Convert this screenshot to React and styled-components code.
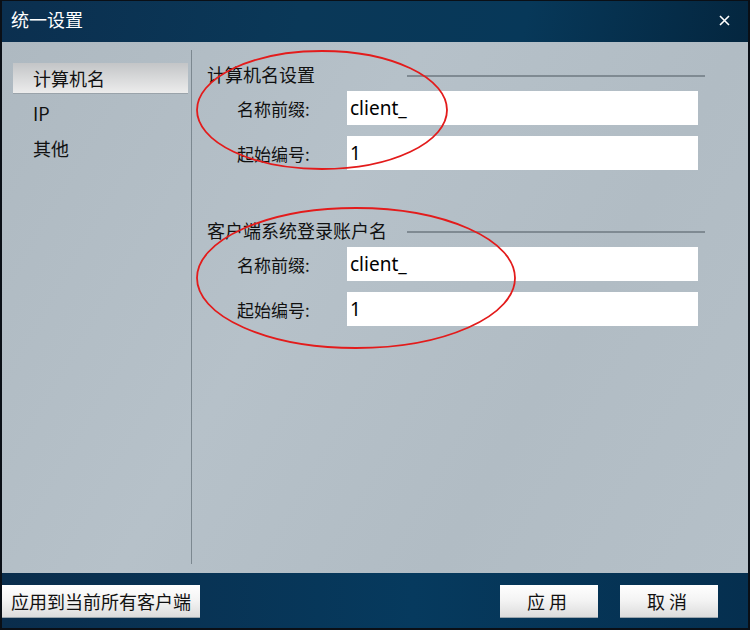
import React from 'react';
import styled, { createGlobalStyle } from 'styled-components';

const GlobalStyle = createGlobalStyle`
  html, body {
    margin: 0;
    padding: 0;
    background: #000;
  }
  body {
    font-family: "Noto Sans", "Noto Sans CJK SC", sans-serif;
  }
`;

const Frame = styled.div`
  position: relative;
  width: 750px;
  height: 630px;
  box-sizing: border-box;
  border: 2px solid #0a0f16;
  border-top-width: 1px;
  display: flex;
  flex-direction: column;
  background: linear-gradient(90deg, #0a2d4c 0%, #063a5e 55%, #052f4f 100%);
  overflow: hidden;
`;

const TitleBar = styled.div`
  height: 41px;
  display: flex;
  align-items: center;
  justify-content: space-between;
  padding: 0 18px 6px 9px;
  box-sizing: border-box;
  color: #fff;
  font-size: 18px;
  font-family: "Noto Sans CJK SC", sans-serif;
  background: linear-gradient(100deg, #0b2f4f 0%, #0a3858 40%, #073859 70%, #04263f 100%);
`;

const CloseIcon = styled.svg`
  width: 11px;
  height: 11px;
  margin-top: 4px;
`;

const Body = styled.div`
  height: 531px;
  display: flex;
  background: linear-gradient(120deg, #aeb9c1 0%, #b6c1c9 40%, #b1bcc4 70%, #b5c0c8 100%);
`;

const Sidebar = styled.div`
  width: 189px;
  padding: 21px 0 0 11px;
  box-sizing: border-box;
  display: flex;
  flex-direction: column;
  gap: 4px;
`;

const NavItem = styled.div`
  width: 175px;
  height: 31px;
  box-sizing: border-box;
  display: flex;
  align-items: center;
  padding-left: 20px;
  font-size: 18px;
  color: #111;
  font-family: "Noto Sans CJK SC", sans-serif;
  background: ${p => (p.$active ? 'linear-gradient(180deg, #c3c5c7 0%, #d8d9da 50%, #ececec 100%)' : 'transparent')};
  border-bottom: 1px solid ${p => (p.$active ? '#9aa3aa' : 'transparent')};
`;

const Content = styled.div`
  flex: 1;
  margin: 8px 0 9px;
  border-left: 1px solid #7c8890;
  padding: 12px 43px 0 15px;
  display: flex;
  flex-direction: column;
`;

const Group = styled.div`
  display: flex;
  flex-direction: column;
  margin-bottom: ${p => p.$gap || 0}px;
`;

const GroupHead = styled.div`
  display: flex;
  align-items: center;
  height: 24px;
  margin-bottom: 5px;
`;

const GroupTitle = styled.span`
  width: 200px;
  font-size: 18px;
  color: #111;
  font-family: "Noto Sans CJK SC", sans-serif;
  white-space: nowrap;
`;

const GroupLine = styled.div`
  flex: 1;
  height: 2px;
  margin-top: 4px;
  background: #7f8a92;
`;

const Row = styled.div`
  display: flex;
  align-items: center;
  padding: 0 7px 0 30px;
  margin-bottom: 11px;
`;

const Label = styled.span`
  width: 110px;
  font-size: 17px;
  color: #111;
  font-family: "Noto Sans CJK SC", sans-serif;
`;

const Field = styled.div`
  flex: 1;
  height: 34px;
  background: #fff;
  display: flex;
  align-items: center;
  padding-left: 3px;
  font-size: 19px;
  color: #000;
  font-family: "Noto Sans", sans-serif;
`;

const Footer = styled.div`
  flex: 1;
  display: flex;
  align-items: flex-start;
  padding: 12px 30px 0 0;
`;

const Spacer = styled.div`
  flex: 1;
`;

const Button = styled.button`
  height: 32px;
  width: ${p => p.$width}px;
  margin-left: ${p => p.$left || 0}px;
  border: none;
  padding: 0;
  font-size: 18px;
  letter-spacing: ${p => p.$spaced ? '4px' : '0'};
  color: #111;
  font-family: "Noto Sans CJK SC", sans-serif;
  background: linear-gradient(180deg, #ffffff 0%, #f3f3f3 50%, #dcdcdc 100%);
  box-shadow: 0 1px 0 #9aa5ad;
`;

const Marks = styled.svg`
  position: absolute;
  left: -2px;
  top: -1px;
  width: 750px;
  height: 630px;
  pointer-events: none;
`;

const computerFields = [
  { label: '名称前缀:', value: 'client_' },
  { label: '起始编号:', value: '1' },
];

const accountFields = [
  { label: '名称前缀:', value: 'client_' },
  { label: '起始编号:', value: '1' },
];

function renderField(field) {
  return (
    <Row key={field.label}>
      <Label>{field.label}</Label>
      <Field>{field.value}</Field>
    </Row>
  );
}

export default function App() {
  return (
    <>
      <GlobalStyle />
      <Frame>
        <TitleBar>
          <span>统一设置</span>
          <CloseIcon viewBox="0 0 11 11">
            <path d="M1 1 L10 10 M10 1 L1 10" stroke="#fff" strokeWidth="1.6" />
          </CloseIcon>
        </TitleBar>
        <Body>
          <Sidebar>
            <NavItem $active>计算机名</NavItem>
            <NavItem>IP</NavItem>
            <NavItem>其他</NavItem>
          </Sidebar>
          <Content>
            <Group $gap={37}>
              <GroupHead>
                <GroupTitle>计算机名设置</GroupTitle>
                <GroupLine />
              </GroupHead>
              {computerFields.map(renderField)}
            </Group>
            <Group>
              <GroupHead>
                <GroupTitle>客户端系统登录账户名</GroupTitle>
                <GroupLine />
              </GroupHead>
              {accountFields.map(renderField)}
            </Group>
          </Content>
        </Body>
        <Footer>
          <Button $width={198}>应用到当前所有客户端</Button>
          <Spacer />
          <Button $width={98} $spaced>应用</Button>
          <Button $width={98} $left={22} $spaced>取消</Button>
        </Footer>
        <Marks viewBox="0 0 750 630">
          <ellipse cx="322" cy="110" rx="125" ry="59" fill="none" stroke="#e31b1b" strokeWidth="1.8" />
          <ellipse cx="356" cy="278" rx="159" ry="70" fill="none" stroke="#e31b1b" strokeWidth="1.8" />
        </Marks>
      </Frame>
    </>
  );
}
